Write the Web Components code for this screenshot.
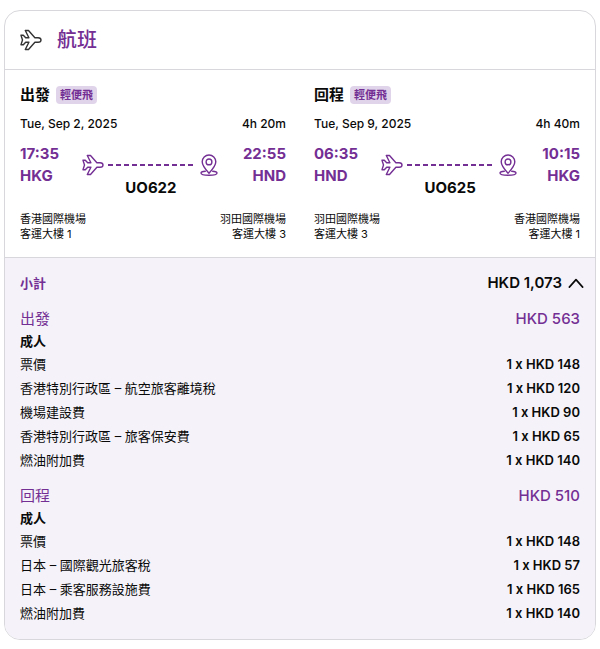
<!DOCTYPE html>
<html lang="zh-Hant">
<head>
<meta charset="utf-8">
<meta name="viewport" content="width=device-width, initial-scale=1">
<title>航班</title>
<style>
  :root { --purple: #742f94; --ink: #0a0a0a; --line: #d8d8dc; --tint: #f5f3f9; --badge: #e0d4ea; }
  body { margin: 0; padding: 10px 4px; background: #fff; color: var(--ink);
    font-family: Inter, "Noto Sans CJK TC", sans-serif; }
</style>
</head>
<body>
<trip-card>
  <flight-leg heading="出發" fare="輕便飛" date="Tue, Sep 2, 2025" duration="4h 20m" number="UO622"
    dep-time="17:35" dep-code="HKG" dep-airport="香港國際機場" dep-terminal="客運大樓 1"
    arr-time="22:55" arr-code="HND" arr-airport="羽田國際機場" arr-terminal="客運大樓 3"></flight-leg>
  <flight-leg heading="回程" fare="輕便飛" date="Tue, Sep 9, 2025" duration="4h 40m" number="UO625"
    dep-time="06:35" dep-code="HND" dep-airport="羽田國際機場" dep-terminal="客運大樓 3"
    arr-time="10:15" arr-code="HKG" arr-airport="香港國際機場" arr-terminal="客運大樓 1"></flight-leg>
  <price-summary slot="summary" label="小計" total="HKD 1,073">
    <price-group heading="出發" total="HKD 563" passenger="成人"
      items="票價|1 x HKD 148;香港特別行政區 – 航空旅客離境稅|1 x HKD 120;機場建設費|1 x HKD 90;香港特別行政區 – 旅客保安費|1 x HKD 65;燃油附加費|1 x HKD 140"></price-group>
    <price-group heading="回程" total="HKD 510" passenger="成人"
      items="票價|1 x HKD 148;日本 – 國際觀光旅客稅|1 x HKD 57;日本 – 乘客服務設施費|1 x HKD 165;燃油附加費|1 x HKD 140"></price-group>
  </price-summary>
</trip-card>

<script>
const ICONS = {
  plane: '<path d="M2 7.200h2.300l2.400 2.600h3.200L6.300 2.500h3.200l6.400 7.200h3.200c1.700 0 2.900 1 2.900 2.300s-1.200 2.300-2.900 2.300h-3.200L9.500 21.500H6.300l3.600-7.300H6.700l-2.400 2.600H2L3.500 12z"/>',
  pin: '<path d="M12 20.200C8.500 16.500 5.200 12.600 5.200 8.800a6.800 6.800 0 0 1 13.600 0c0 3.800-3.300 7.700-6.800 11.400z"/><circle cx="12" cy="8.900" r="2.900"/><path d="M8.300 18.200c-2.600.2-4.300.8-4.300 1.800 0 1.300 3.600 2.200 8 2.200s8-.9 8-2.200c0-1-1.700-1.600-4.300-1.800"/>',
  up: '<path d="M4 17l8-9 8 9"/>'
};

class UiIcon extends HTMLElement {
  connectedCallback() {
    this.attachShadow({ mode: 'open' }).innerHTML = `
      <style>:host { display: block; flex: none; width: 24px; height: 24px; } svg { display: block; width: 100%; height: 100%; }</style>
      <svg viewBox="0 0 24 24" fill="none" stroke="currentColor" stroke-width="${this.getAttribute('weight') || 1.4}" stroke-linecap="round" stroke-linejoin="round" aria-hidden="true">${ICONS[this.getAttribute('name')]}</svg>`;
  }
}
customElements.define('ui-icon', UiIcon);

class FlightLeg extends HTMLElement {
  connectedCallback() {
    const a = n => this.getAttribute(n);
    this.attachShadow({ mode: 'open' }).innerHTML = `
      <style>
        :host { display: block; min-width: 0; }
        .row { display: flex; justify-content: space-between; }
        .head { display: flex; align-items: center; gap: 6px; }
        h2 { margin: 0; font-size: 15px; line-height: 20px; font-weight: 700; }
        .badge { padding: 0 4px; border-radius: 4px; background: var(--badge); color: var(--purple);
          font-size: 11px; line-height: 18px; font-weight: 600; }
        .date { margin-top: 11px; font-size: 12px; line-height: 16px; font-weight: 500; }
        .route { display: flex; margin-top: 11px; gap: 22px; color: var(--purple); }
        .stop { font-size: 15px; line-height: 22px; font-weight: 700; }
        .end { text-align: right; }
        .path { flex: 1; min-width: 0; padding-top: 10px; }
        .track { display: flex; align-items: center; gap: 3px; }
        .dash { flex: 1; height: 2px; background: repeating-linear-gradient(90deg, var(--purple) 0 5px, transparent 5px 8px); }
        .no { color: var(--ink); text-align: center; font-size: 15px; line-height: 22px; font-weight: 700; }
        .place { margin-top: 13px; font-size: 11px; line-height: 15px; }
      </style>
      <div class="head"><h2>${a('heading')}</h2><span class="badge">${a('fare')}</span></div>
      <div class="row date"><span>${a('date')}</span><span>${a('duration')}</span></div>
      <div class="route">
        <div class="stop"><div>${a('dep-time')}</div><div>${a('dep-code')}</div></div>
        <div class="path">
          <div class="track"><ui-icon name="plane"></ui-icon><div class="dash"></div><ui-icon name="pin"></ui-icon></div>
          <div class="no">${a('number')}</div>
        </div>
        <div class="stop end"><div>${a('arr-time')}</div><div>${a('arr-code')}</div></div>
      </div>
      <div class="row place">
        <div><div>${a('dep-airport')}</div><div>${a('dep-terminal')}</div></div>
        <div class="end"><div>${a('arr-airport')}</div><div>${a('arr-terminal')}</div></div>
      </div>`;
  }
}
customElements.define('flight-leg', FlightLeg);

class PriceGroup extends HTMLElement {
  connectedCallback() {
    const a = n => this.getAttribute(n);
    const rows = a('items').split(';').map(r => r.split('|'))
      .map(([k, v]) => `<tr><th scope="row">${k}</th><td>${v}</td></tr>`).join('');
    this.attachShadow({ mode: 'open' }).innerHTML = `
      <style>
        :host { display: block; }
        table { width: 100%; border-collapse: collapse; font-size: 13px; line-height: 24px; }
        th, td { padding: 0; }
        th { text-align: left; font-weight: 400; }
        td { text-align: right; font-weight: 600; }
        .total > * { color: var(--purple); font-size: 15px; line-height: 22px; }
        .total td { font-weight: 500; }
        .who th { font-weight: 700; line-height: 22px; }
      </style>
      <table>
        <thead>
          <tr class="total"><th scope="col">${a('heading')}</th><td>${a('total')}</td></tr>
          <tr class="who"><th colspan="2" scope="colgroup">${a('passenger')}</th></tr>
        </thead>
        <tbody>${rows}</tbody>
      </table>`;
  }
}
customElements.define('price-group', PriceGroup);

class PriceSummary extends HTMLElement {
  connectedCallback() {
    this.attachShadow({ mode: 'open' }).innerHTML = `
      <style>
        :host { display: block; padding: 14px 15px; background: var(--tint); border-top: 1px solid var(--line); }
        button { display: flex; align-items: center; width: 100%; padding: 0; border: 0; background: none; color: inherit;
          font: inherit; font-size: 15px; line-height: 22px; cursor: pointer; }
        .label { flex: 1; text-align: left; color: var(--purple); font-size: 13px; font-weight: 600; }
        .sum { font-weight: 600; }
        ui-icon { width: 20px; height: 20px; margin-left: 4px; margin-right: -6px; }
        .groups { display: grid; gap: 13px; margin-top: 14px; }
        .groups[hidden] { display: none; }
      </style>
      <button type="button" aria-expanded="true"><span class="label">${this.getAttribute('label')}</span><span class="sum">${this.getAttribute('total')}</span><ui-icon name="up" weight="2"></ui-icon></button>
      <div class="groups"><slot></slot></div>`;
    const b = this.shadowRoot.querySelector('button'), g = this.shadowRoot.querySelector('.groups');
    b.addEventListener('click', () => { g.hidden = !g.hidden; b.setAttribute('aria-expanded', String(!g.hidden)); });
  }
}
customElements.define('price-summary', PriceSummary);

class TripCard extends HTMLElement {
  connectedCallback() {
    this.attachShadow({ mode: 'open' }).innerHTML = `
      <style>
        :host { display: block; border: 1px solid var(--line); border-radius: 16px; overflow: hidden; }
        header { display: flex; align-items: center; gap: 14px; padding: 14px; border-bottom: 1px solid var(--line); }
        ui-icon { color: #333; }
        h1 { margin: 0; color: var(--purple); font-size: 20px; line-height: 30px; font-weight: 500; }
        .legs { display: grid; grid-template-columns: 1fr 1fr; gap: 28px; padding: 15px; }
      </style>
      <header><ui-icon name="plane"></ui-icon><h1>航班</h1></header>
      <div class="legs"><slot></slot></div>
      <slot name="summary"></slot>`;
  }
}
customElements.define('trip-card', TripCard);
</script>
</body>
</html>
